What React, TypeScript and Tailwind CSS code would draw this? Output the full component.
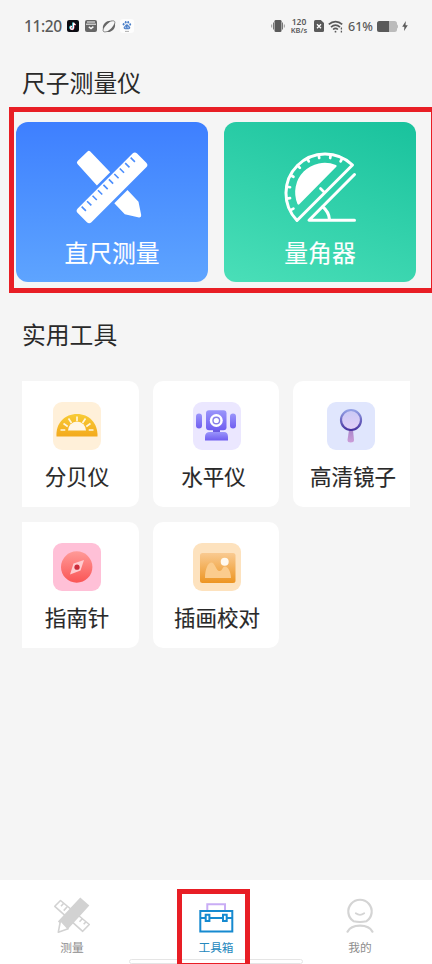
import type { ReactNode } from 'react';

function StatusBar() {
  return (
    <div className="flex h-[52px] items-center text-[#5a5a5a]">
      <span className="mt-[2px] ml-6 w-[43px] font-['Noto_Sans',sans-serif] text-[15.5px] font-medium tracking-[-0.4px]">11:20</span>
      <svg className="h-3 w-3" viewBox="0 0 12 12">
        <rect width="12" height="12" rx="2" fill="#0c0c12" />
        <path d="M6.2 2.7v5.1a1.5 1.5 0 1 1-1.5-1.5" stroke="#4de" strokeWidth="1.3" fill="none" transform="translate(-.4 -.3)" />
        <path d="M6.5 2.7v5.1A1.5 1.5 0 1 1 5 6.3M6.5 2.7c.2 1.4 1.1 1.8 2 1.9" stroke="#f46" strokeWidth="1.3" fill="none" transform="translate(.3 .2)" />
        <path d="M6.5 2.7v5.1A1.5 1.5 0 1 1 5 6.3M6.5 2.7c.2 1.4 1.1 1.8 2 1.9" stroke="#fff" strokeWidth="1.2" fill="none" />
      </svg>
      <svg className="ml-[6px] h-3 w-3" viewBox="0 0 12 12">
        <rect width="12" height="12" rx="2" fill="#666" />
        <path d="M2 2h8M1 4.2h10" stroke="#f5f5f5" strokeWidth="1" />
        <path d="M3.8 6.9l2.200 1.700 2.400-2" stroke="#f5f5f5" strokeWidth="1.400" fill="none" />
      </svg>
      <svg className="ml-[5px] h-[13px] w-[14px]" viewBox="0 0 14 13" fill="#666">
        <path d="M1 9.500C0 4.500 4 0 10 .8 6.500 2.600 3.300 5.500 1 9.500ZM12.700 3C14.500 8 10 13 4.200 11.900 8.200 10 11 7 12.700 3Z" />
        <path d="M1.600 8.500C.3 11.500 1.500 12.400 4.800 11.600M9.200 1.100c3-.8 4.500.2 3.200 3.200" fill="none" stroke="#777" strokeWidth=".9" />
      </svg>
      <svg className="ml-[4px] h-[14px] w-[14px]" viewBox="0 0 14 14">
        <rect width="14" height="14" rx="3" fill="#fdfdfd" />
        <g fill="#4b7fc8">
          <ellipse cx="3.600" cy="5.200" rx=".9" ry="1.300" /><ellipse cx="5.700" cy="3.300" rx=".9" ry="1.300" />
          <ellipse cx="8.200" cy="3.300" rx=".9" ry="1.300" /><ellipse cx="10.200" cy="5.400" rx=".9" ry="1.200" />
          <path d="M6.900 5.200c1.400 0 1.500 1.500 2.800 2.400 1.100 1 .5 2.600-.8 2.600H5c-1.300 0-1.900-1.700-.8-2.600 1.300-.9 1.300-2.400 2.700-2.400Z" />
        </g>
        <path d="M5.300 7.500v1.300h1.100M7.800 7.300v1.500h1.100" stroke="#dfeafa" strokeWidth=".7" fill="none" />
        <path d="M5 12.400h4" stroke="#999" strokeWidth=".8" />
      </svg>

      <svg className="ml-[137px] h-[14px] w-[14px]" viewBox="0 0 14 14">
        <rect x="3.500" y="1" width="7" height="12" rx="1.300" fill="#5a5a5a" />
        <path d="M2.500 3.500v7M11.500 3.500v7" stroke="#777" />
        <path d="M.7 5.500v3M13.300 5.500v3" stroke="#999" />
      </svg>
      <div className="ml-[4px] flex w-[20px] flex-col items-center font-['Noto_Sans',sans-serif] font-semibold">
        <span className="text-[8.500px] leading-[8px]">120</span>
        <span className="text-[7.500px] leading-[8px]">KB/s</span>
      </div>
      <svg className="ml-[5px] h-3 w-[10px]" viewBox="0 0 10 12">
        <path d="M1.500 0h5.300L10 3v7.500q0 1.500-1.500 1.500h-7Q0 12 0 10.500v-9Q0 0 1.500 0Z" fill="#5a5a5a" />
        <path d="M3 4.300l4 4m0-4-4 4" stroke="#fff" strokeWidth="1.300" />
      </svg>
      <svg className="ml-[4px] h-[13px] w-[16px]" viewBox="0 0 16 13" fill="none" stroke="#5a5a5a" strokeWidth="1.700">
        <path d="M.8 4.400c4-3.700 9.400-3.700 13.400 0M3 7.100c2.700-2.500 6.300-2.500 9 0M5.100 9.500c1.400-1.300 3.400-1.300 4.800 0" />
        <circle cx="7.500" cy="11.700" r=".9" fill="#5a5a5a" stroke="none" />
        <path d="M13.400 7.500v2M13.400 10.700v1.800" strokeWidth="1.300" />
      </svg>
      <span className="mt-[3px] ml-[4px] w-[29px] font-['Noto_Sans',sans-serif] text-[12.500px] font-medium">61%</span>
      <svg className="h-[11px] w-[21px]" viewBox="0 0 21 11">
        <rect width="20" height="11" rx="2.500" fill="#bbb" />
        <path d="M2.500 0H12v11H2.500Q0 11 0 8.500v-6Q0 0 2.500 0Z" fill="#5a5a5a" />
        <path d="M20 3.500q1 0 1 2t-1 2" fill="#bbb" />
      </svg>
      <svg className="ml-[4px] h-[10px] w-[6px]" viewBox="0 0 6 10">
        <path d="M3.800 0 .2 5.700h2.200L2 10l3.800-5.800H3.500Z" fill="#5a5a5a" />
      </svg>
    </div>
  );
}

function RulerPencil() {
  return (
    <svg className="h-[76px] w-[76px]" viewBox="74 149 76 76">
      <path d="M90.300 151.600q-1.400-1.500-2.800-.2l-9.900 9.600q-1.500 1.500-.1 3l19.400 21.500 13.300-13.300ZM127.500 189.900 114.300 203.300l10.500 10.900 14.200 3.200q2.500.3 2.200-2.400l-2.700-13.200Z" fill="#fff" />
      <g transform="translate(112 187.900) rotate(-45)">
        <rect x="-42" y="-9.700" width="84" height="19.400" rx="3.200" fill="#fff" />
        <path d="M-36 -8.200v6M-28.300 -8.200v6M-20.600 -8.200v6M-12.900 -8.200v6M-5.200 -8.200v6M2.500 -8.200v6M10.200 -8.200v6M17.900 -8.200v6M25.600 -8.200v6M33.300 -8.200v6" transform="translate(1.300 0)" stroke="#4c8efd" strokeWidth="1.600" />
      </g>
    </svg>
  );
}

const TICK_ANGLES = [-63, -81, -99, -117, -135, -153, -171, -189, -207];

function Protractor() {
  return (
    <svg className="h-[76px] w-[76px]" viewBox="282 149 76 76" fill="none" stroke="#fff" strokeWidth="3" strokeLinecap="round" strokeLinejoin="round">
      <path d="M297 220.500 352.500 165A39.250 39.250 0 0 0 297 220.500Z" />
      <path d="M298.500 203.500A28.500 28.500 0 0 1 335.500 166Z" fill="#fff" strokeWidth="2.200" />
      {TICK_ANGLES.map((angle) => (
        <path key={angle} d="M359.800 192.700H363" transform={`rotate(${angle} 324.700 192.700)`} strokeWidth="2.700" />
      ))}
      <path d="M320.500 188.500l3.500 3.500" strokeWidth="2.700" />
      <path d="M354.500 174.500 309 220.200H354.500M322.500 206.500q6.500 5.500 7 13" />
    </svg>
  );
}

function BigCard({ label, tone, children }: { label: string; tone: string; children: ReactNode }) {
  return (
    <div className={`flex h-40 w-48 flex-col items-center rounded-xl pt-[27px] ${tone}`}>
      {children}
      <span className="mt-[9px] text-[23.800px] leading-9 text-white [-webkit-text-stroke:0.1px_white]">{label}</span>
    </div>
  );
}

function Decibel() {
  return (
    <svg viewBox="0 0 48 48" className="h-12 w-12">
      <defs><linearGradient id="yellow" x2="0" y2="1"><stop stopColor="#f8cb35" /><stop offset="1" stopColor="#f3aa1d" /></linearGradient></defs>
      <rect width="48" height="48" rx="9" fill="#fff0d9" />
      <path d="M3.500 34.500C2.500 21 12 12 24 12s21 9 20.500 22.500Z" fill="url(#yellow)" />
      <path d="M15 28.500a9 9 0 0 1 18 0Z" fill="#fff6e6" />
      <path d="M24 14.500v4.500M15.500 16.500l3 4.500M32.500 16.500l-3 4.500M10.500 21.500l4.200 3M37.500 21.500l-4.200 3M7.500 28h4.800M40.500 28h-4.800" stroke="#fff5da" strokeWidth="1.700" />
    </svg>
  );
}

function Level() {
  return (
    <svg viewBox="0 0 48 48" className="h-12 w-12">
      <defs><linearGradient id="violet" x2="0" y2="1"><stop stopColor="#9a95fb" /><stop offset="1" stopColor="#705ef0" /></linearGradient></defs>
      <rect width="48" height="48" rx="9" fill="#ebe7ff" />
      <rect x="3" y="11.500" width="6" height="15" rx="3" fill="url(#violet)" />
      <rect x="37" y="11.500" width="6" height="15" rx="3" fill="url(#violet)" />
      <path d="M20 27h7v4h-7Z" fill="#6a5be0" />
      <path d="M12 38.500v-3.500q0-5 5-5h14q4 0 4 5v3.500Z" fill="url(#violet)" />
      <rect x="13" y="8.300" width="20.500" height="20" rx="3" fill="url(#violet)" />
      <circle cx="23.300" cy="18.500" r="6.500" fill="#fff" />
      <circle cx="23.300" cy="18.500" r="3.300" fill="#fff" stroke="#867ee8" strokeWidth="1.400" />
    </svg>
  );
}

function Mirror() {
  return (
    <svg viewBox="0 0 48 48" className="h-12 w-12">
      <defs>
        <linearGradient id="rim" x2="0" y2="1"><stop stopColor="#93a0e5" /><stop offset="1" stopColor="#4933a0" /></linearGradient>
        <linearGradient id="glass" x2="0" y2="1"><stop stopColor="#c9c9f5" /><stop offset="1" stopColor="#e3cff7" /></linearGradient>
        <linearGradient id="grip" x2="0" y2="1"><stop stopColor="#a987ca" /><stop offset="1" stopColor="#cc9dd8" /></linearGradient>
      </defs>
      <rect width="48" height="48" rx="9" fill="#e0e6fd" />
      <path d="M22 28h4l1 10q0 2.500-3.300 2.500T20.500 38Z" fill="url(#grip)" />
      <circle cx="24" cy="18" r="10" fill="url(#glass)" stroke="url(#rim)" strokeWidth="2.200" />
    </svg>
  );
}

function Compass() {
  return (
    <svg viewBox="0 0 48 48" className="h-12 w-12">
      <defs><linearGradient id="red" x2="0" y2="1"><stop stopColor="#ff9a98" /><stop offset="1" stopColor="#fa5555" /></linearGradient></defs>
      <rect width="48" height="48" rx="9" fill="#ffc0d7" />
      <circle cx="23.700" cy="24" r="15.700" fill="url(#red)" />
      <path d="M31 17 27.500 27.500 17 31.500 20.500 20.500Z" fill="#ffcbcf" />
      <circle cx="24" cy="24.200" r="2.600" fill="#cb2c3b" />
    </svg>
  );
}

function Illustration() {
  return (
    <svg viewBox="0 0 48 48" className="h-12 w-12">
      <defs><linearGradient id="orange" x2="0" y2="1"><stop stopColor="#f9ca91" /><stop offset="1" stopColor="#ed9522" /></linearGradient></defs>
      <rect width="48" height="48" rx="9" fill="#fde2be" />
      <rect x="7" y="10" width="35.500" height="30" rx="2.500" fill="url(#orange)" />
      <path d="M12 35c0-9 3-15.500 6.500-15.500S23 28 26.500 28s2.500-4.500 5.500-4.500S38 29 38 35Z" fill="#fbcc8d" />
      <circle cx="31.700" cy="18.700" r="4" fill="#fff9ef" />
    </svg>
  );
}

function Tool({ label, shape, shift, children }: { label: string; shape: string; shift: string; children: ReactNode }) {
  return (
    <div className={`flex h-[126px] flex-col items-center bg-white pt-[21px] ${shape}`}>
      {children}
      <span className={`mt-[10px] text-[21.500px] leading-8 whitespace-nowrap [-webkit-text-stroke:0.15px_#292929] ${shift}`}>{label}</span>
    </div>
  );
}

function NavItem({ label, color, children }: { label: string; color: string; children: ReactNode }) {
  return (
    <div className={`flex flex-1 flex-col items-center pt-[17px] text-[11.700px] leading-[18px] ${color}`}>
      {children}
      <span className="mt-[3px]">{label}</span>
    </div>
  );
}

export default function App() {
  return (
    <div className="relative flex h-[964px] w-[432px] flex-col overflow-hidden bg-[#f5f5f5] font-['Noto_Sans_CJK_SC',sans-serif] text-[#292929]">
      <StatusBar />
      <h1 className="mt-[12px] ml-[22px] h-9 text-[23.800px] leading-9">尺子测量仪</h1>
      <div className="mt-[22px] ml-4 flex gap-4">
        <BigCard label="直尺测量" tone="bg-linear-to-b from-[#3e7fff] to-[#5ea4ff]"><RulerPencil /></BigCard>
        <BigCard label="量角器" tone="bg-linear-[20deg] from-[#4adfb8] to-[#19c29d]"><Protractor /></BigCard>
      </div>
      <h2 className="mt-[34px] ml-[22px] h-9 text-[23.800px] leading-9">实用工具</h2>
      <div className="mt-[29px] ml-[22px] grid grid-cols-[117px_126px_117px] gap-x-[14px] gap-y-[15px]">
        <Tool label="分贝仪" shape="rounded-r-[10px] pr-[7px]" shift=""><Decibel /></Tool>
        <Tool label="水平仪" shape="rounded-[10px] pl-[2px]" shift="mr-[7px]"><Level /></Tool>
        <Tool label="高清镜子" shape="rounded-l-[10px] pr-[2px]" shift="ml-[5px]"><Mirror /></Tool>
        <Tool label="指南针" shape="rounded-r-[10px] pr-[7px]" shift=""><Compass /></Tool>
        <Tool label="插画校对" shape="rounded-[10px] pl-[2px]" shift=""><Illustration /></Tool>
      </div>
      <nav className="mt-auto flex h-[84px] bg-white">
        <NavItem label="测量" color="text-[#8d8d8d]">
          <svg className="h-[38px] w-[38px]" viewBox="53 897 38 38" fill="none" stroke="#d2d2d2" strokeWidth="1.600">
            <path d="M60.500 900.500 54.800 906.300 82.700 931.300 89.300 924.500Z" fill="#fff" strokeLinejoin="round" />
            <path d="M63.500 903.500l-2.500 2.800M67.200 906.800l-3.500 3.800M82.500 918.500l-3 3.300M86 921.700l-2.300 2.600" />
            <path d="M80.300 898.600 88.200 905.500 67.500 928.500 59 921.500Z" fill="#d2d2d2" />
            <path d="M60.500 920.500l-2.200 11.700 9.800-3.400Z" fill="#fff" strokeLinejoin="round" />
          </svg>
        </NavItem>
        <NavItem label="工具箱" color="text-[#2588bd]">
          <svg className="h-[38px] w-[38px]" viewBox="197 897 38 38" fill="none">
            <path d="M207.300 910v-5.700h17.700v5.700" stroke="#c9adf5" strokeWidth="2" />
            <g stroke="#168ad0" strokeWidth="2">
              <path d="M200.300 911h32v20.500h-32ZM200 918h5M210 918h12M227 918h5" />
              <path d="M205.700 914.800h3.700v6.200h-3.700ZM223 914.800h3.700v6.200h-3.700Z" />
            </g>
          </svg>
        </NavItem>
        <NavItem label="我的" color="text-[#8d8d8d]">
          <svg className="h-[38px] w-[38px]" viewBox="341 897 38 38" fill="none" stroke="#d4d4d4" strokeWidth="2.200" strokeLinecap="round">
            <path d="M353.500 921.200A11.700 11.700 0 1 1 366.500 921.200Q360 922.800 353.500 921.200ZM347.500 931.700C351.500 923.500 368.500 923.500 372.500 931.700" />
            <path d="M355.800 913.300q4.200 3 8.400 0" strokeWidth="1.800" />
          </svg>
        </NavItem>
      </nav>
      <div className="absolute top-[959px] left-[129px] h-[5px] w-[174px] rounded-full border border-[#e5e5e5] bg-white" />
      <div className="absolute top-[107px] left-[9px] h-[186px] w-[427px] border-5 border-[#e81e25]" />
      <div className="absolute top-[889px] left-[177px] h-[79px] w-[73px] border-5 border-[#e81e25]" />
    </div>
  );
}
